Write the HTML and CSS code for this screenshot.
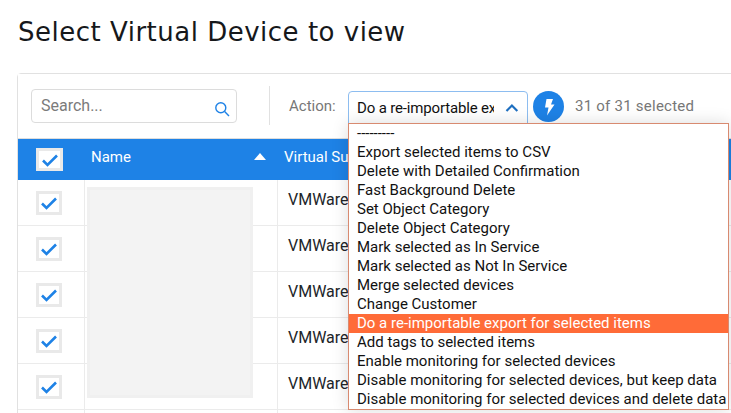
FILE: index.html
```html
<!DOCTYPE html>
<html lang="en">
<head>
<meta charset="utf-8">
<title>Select Virtual Device to view</title>
<link rel="stylesheet" href="styles.css">
</head>
<body>
<h1 class="title">Select Virtual Device to view</h1>
<section class="card">
  <div class="toolbar">
    <div class="search">
      <span class="search-text">Search...</span>
      <svg class="search-icon" width="16" height="16" viewBox="0 0 16 16"><circle cx="6.8" cy="6.8" r="5" fill="none" stroke="#1e82e6" stroke-width="1.4"/><path d="M10.6 10.600 15 15" stroke="#1e82e6" stroke-width="1.4" fill="none"/></svg>
    </div>
    <div class="divider"></div>
    <span class="action-label">Action:</span>
    <div class="select">
      <span class="select-text">Do a re-importable export for selected items</span>
      <svg class="chevron" width="14" height="10" viewBox="0 0 14 10"><path d="M1.5 8 7 2.500 12.500 8" fill="none" stroke="#1e6fc0" stroke-width="2.2"/></svg>
    </div>
    <div class="run">
      <svg width="12" height="18" viewBox="0 0 12 18"><path d="M3.500 1H10L8 6.500H11.500L4 17.500 5.500 9.500H2z" fill="#fff"/></svg>
    </div>
    <span class="count">31 of 31 selected</span>
  </div>
  <div class="head">
    <div class="c-check"><span class="box box-head"><svg width="20" height="16" viewBox="0 0 20 16"><path d="M3 8.500 7.500 13 17 3.500" fill="none" stroke="#1e82e6" stroke-width="2.6"/></svg></span></div>
    <div class="c-name head-name"><span>Name</span><i class="sort"></i></div>
    <div class="c-type">Virtual Subtype</div>
  </div>
  <div class="rows">
    <div class="row"><div class="c-check"><span class="box"><svg width="18" height="14" viewBox="0 0 18 14"><path d="M2 7.500 6.500 12 16 2.500" fill="none" stroke="#1e82e6" stroke-width="2.600"/></svg></span></div><div class="c-name"></div><div class="c-type">VMWare</div></div>
    <div class="row"><div class="c-check"><span class="box"><svg width="18" height="14" viewBox="0 0 18 14"><path d="M2 7.500 6.500 12 16 2.500" fill="none" stroke="#1e82e6" stroke-width="2.600"/></svg></span></div><div class="c-name"></div><div class="c-type">VMWare</div></div>
    <div class="row"><div class="c-check"><span class="box"><svg width="18" height="14" viewBox="0 0 18 14"><path d="M2 7.500 6.500 12 16 2.500" fill="none" stroke="#1e82e6" stroke-width="2.600"/></svg></span></div><div class="c-name"></div><div class="c-type">VMWare</div></div>
    <div class="row"><div class="c-check"><span class="box"><svg width="18" height="14" viewBox="0 0 18 14"><path d="M2 7.500 6.500 12 16 2.500" fill="none" stroke="#1e82e6" stroke-width="2.600"/></svg></span></div><div class="c-name"></div><div class="c-type">VMWare</div></div>
    <div class="row"><div class="c-check"><span class="box"><svg width="18" height="14" viewBox="0 0 18 14"><path d="M2 7.500 6.500 12 16 2.500" fill="none" stroke="#1e82e6" stroke-width="2.600"/></svg></span></div><div class="c-name"></div><div class="c-type">VMWare</div></div>
    <div class="row"><div class="c-check"></div><div class="c-name"></div><div class="c-type"></div></div>
    <div class="redacted"></div>
  </div>
  <ul class="menu">
    <li>---------</li>
    <li>Export selected items to CSV</li>
    <li>Delete with Detailed Confirmation</li>
    <li>Fast Background Delete</li>
    <li>Set Object Category</li>
    <li>Delete Object Category</li>
    <li>Mark selected as In Service</li>
    <li>Mark selected as Not In Service</li>
    <li>Merge selected devices</li>
    <li>Change Customer</li>
    <li class="active">Do a re-importable export for selected items</li>
    <li>Add tags to selected items</li>
    <li>Enable monitoring for selected devices</li>
    <li>Disable monitoring for selected devices, but keep data</li>
    <li>Disable monitoring for selected devices and delete data</li>
  </ul>
</section>
</body>
</html>
```
FILE: styles.css
```css
* { box-sizing: border-box; }
html, body { margin: 0; height: 413px; overflow: hidden; background: #fff; }
body { padding: 15px 0 0 18px; font-family: Roboto, "Liberation Sans", sans-serif; color: #212529; }
.title { margin: 0 0 24px; font: 400 26px/34px "DejaVu Sans", sans-serif; letter-spacing: .5px; color: #16181b; }
.card { position: relative; width: 760px; margin-left: -1px; border: 1px solid #e1e1e1; border-radius: 4px 0 0 0; height: 400px; }
.toolbar { height: 64px; display: flex; align-items: flex-start; padding: 15px 0 0 13px; background: #fff; }
.search { width: 206px; height: 34px; border: 1px solid #dcdcdc; border-radius: 4px; position: relative; padding: 6px 9px; font-size: 16px; line-height: 20px; color: #7b7b7b; }
.search-icon { position: absolute; right: 6px; top: 11px; }
.divider { width: 1px; height: 39px; margin: -3px 0 0 32px; background: #e1e1e1; }
.action-label { margin: 8px 0 0 19px; font-size: 15px; line-height: 18px; color: #777; width: 59px; }
.select { position: relative; width: 180px; height: 33px; margin-top: 2px; border: 1px solid #8dbdf0; border-radius: 4px 4px 0 0; display: flex; align-items: center; padding: 0 8px; font-size: 15px; color: #111; }
.select-text { width: 139px; overflow: hidden; white-space: nowrap; letter-spacing: -.16px; }
.chevron { margin-left: 11px; }
.run { width: 31px; height: 31px; margin: 2px 0 0 5px; border-radius: 50%; background: #1e82e6; display: flex; align-items: center; justify-content: center; }
.count { margin: 8px 0 0 11px; font-size: 15px; line-height: 18px; letter-spacing: .24px; color: #777; }
.head { height: 42px; display: flex; background: #1e82e6; color: #fff; font-size: 15px; border-top: 1px solid #ddd; }
.rows { position: relative; }
.row { height: 46px; display: flex; border-bottom: 1px solid #ebebeb; font-size: 16px; }
.c-check { width: 66px; flex: none; display: flex; align-items: center; padding: 1px 0 0 18px; }
.c-name { width: 194px; flex: none; border-left: 1px solid #ebebeb; border-right: 1px solid #ebebeb; }
.c-type { flex: 1; padding: 10px 0 0 10px; line-height: 20px; }
.head .c-check { padding: 0 0 0 18px; }
.head .c-name, .head .c-type { border: 0; }
.head-name { display: flex; align-items: flex-start; justify-content: space-between; padding: 8px 12px 0 7px; line-height: 20px; }
.head .c-type { padding: 8px 0 0 6px; }
.sort { width: 0; height: 0; margin-top: 6px; border: 6px solid transparent; border-top: 0; border-bottom: 7px solid #fff; }
.box { width: 26px; height: 24px; background: #fff; border: 3px solid #e9e9e9; display: flex; align-items: center; justify-content: center; }
.box-head { width: 27px; height: 23px; }
.redacted { position: absolute; left: 69px; top: 7px; width: 166px; height: 211px; background: #f3f3f3; border: 3px solid #f0f0f0; }
.menu { position: absolute; left: 330px; top: 49px; width: 381px; height: 287px; margin: 0; padding: 0; list-style: none; background: #fff; border: 1px solid #d88a70; font-size: 15px; line-height: 19px; color: #111; box-shadow: 0 0 16px rgba(0,0,0,.14); }
.menu li { padding-left: 8px; white-space: nowrap; }
.menu .active { background: #ff6b38; color: #fff; }
```
